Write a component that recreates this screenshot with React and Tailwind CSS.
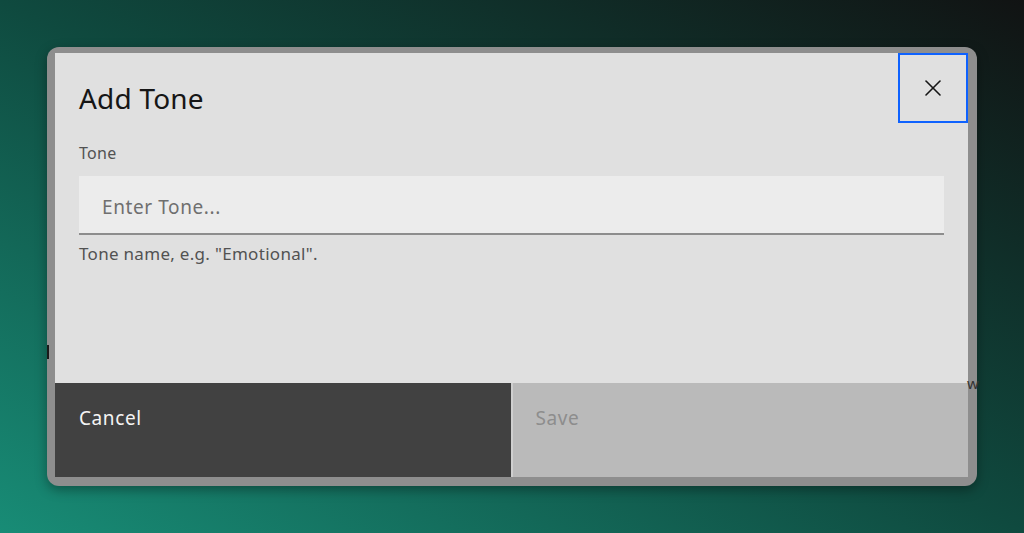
import { X } from 'lucide-react';

const AddToneModal = () => {
    return (
        <div className="w-[930px] h-[439px] rounded-[12px] bg-[#8e8e8e] pt-[6px] pl-[8px] pr-[9px] pb-[9px] shadow-[0_4px_12px_rgba(0,0,0,0.35)]">
            <div className="relative flex flex-col h-full bg-[#e0e0e0]">
                {/* close button, focused */}
                <button className="absolute top-0 right-0 w-[70px] h-[70px] flex items-center justify-center border-2 border-[#0f62fe] text-[#161616]">
                    <X size={28} strokeWidth={1.4} />
                </button>

                <div className="flex-1 px-[24px] pt-[27px]">
                    <h2 className="text-[28px] leading-[36px] text-[#161616] tracking-[0.2px]">Add Tone</h2>
                    <label className="block mt-[27px] text-[16px] leading-[20px] text-[#525252] tracking-[0.3px]">Tone</label>
                    <div className="mt-[13px] h-[59px] bg-[#ececec] border-b-2 border-[#8d8d8d] flex items-center px-[23px] pt-[5px]">
                        <span className="text-[19px] text-[#6f6f6f] tracking-[0.6px]">Enter Tone...</span>
                    </div>
                    <p className="mt-[9px] text-[17px] leading-[20px] text-[#525252] tracking-[0.3px]">Tone name, e.g. "Emotional".</p>
                </div>

                <div className="grid grid-cols-2 gap-[2px] h-[94px] bg-[#cfcfcf]">
                    <button className="bg-[#414141] text-left px-[24px] pt-[23px] flex items-start text-[19px] leading-[24px] text-[#f4f4f4] tracking-[0.6px]">
                        Cancel
                    </button>
                    <button disabled className="bg-[#bababa] text-left px-[23px] pt-[23px] flex items-start text-[19px] leading-[24px] text-[#8d8d8d] tracking-[0.6px]">
                        Save
                    </button>
                </div>
            </div>
        </div>
    );
};

export default function App() {
    return (
        <div className="relative w-full h-[533px] overflow-hidden bg-[linear-gradient(to_top_right,#188c76,#0f4a3f_50%,#111313)] pt-[47px] pl-[47px] font-['Noto_Sans',sans-serif]">
            <AddToneModal />
            {/* bits of the page underneath peeking out */}
            <span className="absolute left-[47px] top-[345px] w-[2px] h-[14px] bg-[#1a1a1a]"></span>
            <span className="absolute left-[967px] top-[375px] text-[15px] leading-[16px] text-[#333]">w</span>
        </div>
    );
}
